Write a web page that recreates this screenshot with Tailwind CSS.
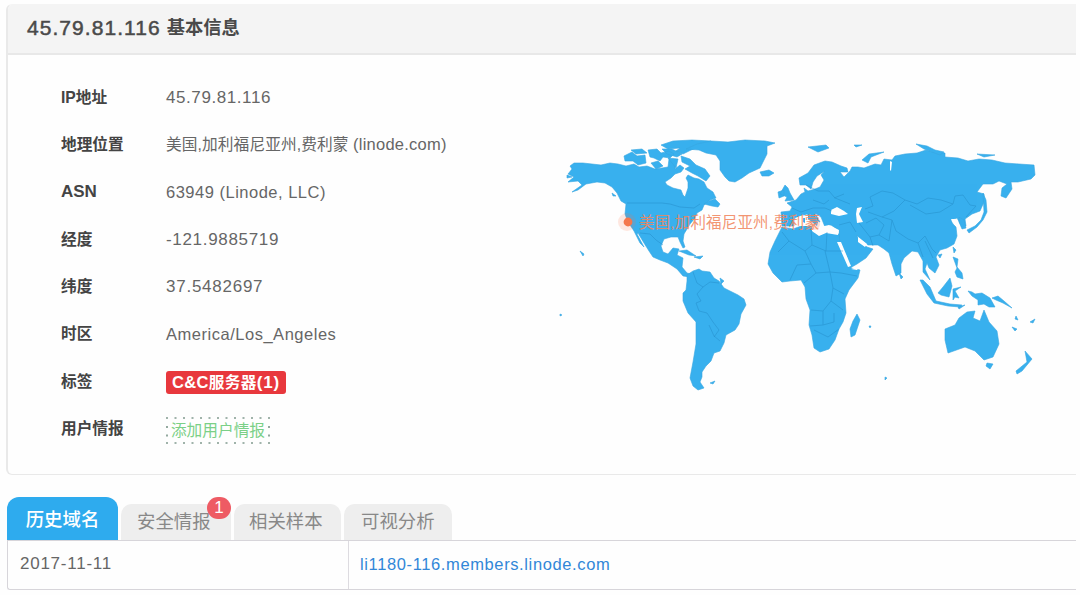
<!DOCTYPE html>
<html lang="zh-CN">
<head>
<meta charset="utf-8">
<title>45.79.81.116 基本信息</title>
<script src="https://cdn.jsdelivr.net/npm/@tailwindcss/browser@4"></script>
</head>
<body class="w-[1080px] h-[595px] overflow-hidden bg-[#fefefe] pl-[6px] pr-1 pt-1 font-['Liberation_Sans','Noto_Sans_CJK_SC',sans-serif] text-[#666]">
<section class="h-[471px] rounded-l-md border-y border-l-2 border-[#e9e9e9] border-t-[#f4f4f4] overflow-hidden">
  <header class="h-[50px] flex items-center gap-[6px] pl-[19px] pb-[3px] bg-[#f4f4f4] border-b-2 border-[#e8e8e8] text-[#4a4a4a]">
    <span class="text-[21px] tracking-[1.05px] [-webkit-text-stroke:0.5px_#4a4a4a]">45.79.81.116</span>
    <span class="text-[18.3px] font-bold">基本信息</span>
  </header>
  <div class="flex pt-[18px]">
    <dl class="w-[542px] pl-[53px] pt-[0.6px] text-[15.7px]">
      <div class="flex items-center h-[47.4px]"><dt class="w-[105px] font-bold text-[#444]">IP地址</dt><dd class="text-[17px] tracking-[0.58px]">45.79.81.116</dd></div>
      <div class="flex items-center h-[47.4px]"><dt class="w-[105px] font-bold text-[#444]">地理位置</dt><dd class="flex items-center whitespace-nowrap"><span class="w-[187px] tracking-[0.1px]">美国,加利福尼亚州,费利蒙</span><span class="text-[16.5px] tracking-[0.25px]">(linode.com)</span></dd></div>
      <div class="flex items-center h-[47.4px]"><dt class="w-[105px] font-bold text-[#444] text-[17px]">ASN</dt><dd class="text-[16.5px] tracking-[0.5px]">63949 (Linode, LLC)</dd></div>
      <div class="flex items-center h-[47.4px]"><dt class="w-[105px] font-bold text-[#444]">经度</dt><dd class="text-[17px] tracking-[0.68px]">-121.9885719</dd></div>
      <div class="flex items-center h-[47.4px]"><dt class="w-[105px] font-bold text-[#444]">纬度</dt><dd class="text-[17px] tracking-[0.75px]">37.5482697</dd></div>
      <div class="flex items-center h-[47.4px]"><dt class="w-[105px] font-bold text-[#444]">时区</dt><dd class="text-[16.5px] tracking-[0.52px]">America/Los_Angeles</dd></div>
      <div class="flex items-center h-[47.4px]"><dt class="w-[105px] font-bold text-[#444]">标签</dt><dd class="w-[120px] h-[23px] mt-[2px] flex items-center justify-center rounded-[3px] bg-[#e8383d] text-white font-bold tracking-[0.3px] whitespace-nowrap"><span class="text-[16.5px]">C&amp;C</span>服务器<span class="text-[17px] tracking-[0.8px]">(1)</span></dd></div>
      <div class="flex items-center h-[47.4px]"><dt class="w-[105px] font-bold text-[#444]">用户情报</dt><dd class="mt-[3px] grid place-items-center text-[#7bd087] whitespace-nowrap"><svg class="col-start-1 row-start-1" width="104" height="27" fill="none" stroke="#819b8f" stroke-width="1.7" stroke-dasharray="2 6.5"><path d="M0 1H104M0 26H104M1 9V22M103 9V22"/></svg><span class="col-start-1 row-start-1">添加用户情报</span></dd></div>
    </dl>
    <svg class="mt-[58px] shrink-0" width="500" height="265" viewBox="550 130 500 265" fill="#38b0ee" stroke="#38a6e0" stroke-width=".6" stroke-linejoin="round">
      <!-- North America -->
      <path d="M570 165L574 162L583 162L592 163L601 164L610 162L618 163L626 165L634 163L639 166L647 165L655 168L662 167L668 166L669 158L675 163L675 168L680 164L684 167L681 171L675 173L671 177L665 181L667 184L673 187L681 189L683 194L685 196L688 187L688 181L686 177L688 174L694 177L699 178L704 181L707 187L713 191L716 197L710 199L704 204L702 209L697 212L695 217L690 223L687 228L684 233L683 240L685 246L683 247L680 241L678 236L671 236L664 238L661 245L663 251L668 253L673 247L679 248L677 254L683 257L682 266L687 272L691 273L690 276L683 275L677 268L668 262L660 259L653 256L649 250L644 242L638 232L637 233L644 246L640 242L634 230L628 221L625 213L626 203L621 200L617 192L612 186L605 182L597 181L586 183L578 189L572 191L582 184L578 180L568 181L574 176L568 173L572 168Z"/>
      <!-- Arctic islands -->
      <path d="M624 155L632 151L637 155L645 154L646 162L638 164L633 160L625 160ZM631 149L642 148L647 152L636 153ZM648 149L657 148L661 152L669 150L674 153L670 157L663 156L660 160L654 157L650 156ZM651 162L658 160L663 165L656 168ZM662 148L672 148L682 153L677 156L667 153ZM668 157L678 158L676 167ZM681 155L690 158L696 164L705 168L710 175L706 180L698 175L692 172L685 168L690 165L682 161ZM661 144L673 140L692 139L711 140L700 146L691 149L683 153L676 150L680 147L668 148Z"/>
      <!-- Greenland -->
      <path d="M686 148L697 143L711 140L728 141L745 139L765 140L775 142L767 145L767 153L763 161L760 167L749 172L742 177L735 181L729 180L725 176L720 169L720 160L716 154L706 152L699 149Z"/>
      <path d="M704 203L709 200L715 198L720 203L718 206L712 205ZM760 171L769 169L774 172L769 175L762 175ZM679 250L687 249L696 255L689 254ZM694 256L703 255L700 258ZM567 174L572 176L567 177ZM580 250L584 253L583 255ZM612 192L616 195L613 195ZM560 313L562 314L560 315ZM885 376L887 377L885 379ZM869 325L871 325L870 327Z"/>
      <!-- South America -->
      <path d="M687 274L693 270L699 268L702 270L710 271L714 277L719 280L724 287L730 290L738 294L744 298L746 304L741 313L739 323L735 329L726 334L724 342L720 350L714 352L711 360L706 365L702 371L702 376L700 381L704 387L698 389L693 385L690 377L693 361L696 343L696 321L688 312L683 300L683 292L686 289L687 280ZM710 382L715 380L713 383ZM720 277L724 280L721 283Z"/>
      <!-- Europe and Asia -->
      <path d="M781 211L790 210L792 206L787 202L796 199L801 193L805 191L804 187L808 190L815 188L820 186L824 179L821 174L825 170L817 175L813 181L811 188L806 184L800 184L799 177L808 172L814 164L825 160L832 161L841 165L847 167L848 171L840 171L844 176L850 170L852 166L858 166L864 167L875 163L881 164L884 158L892 159L895 155L905 153L917 152L926 149L933 151L945 152L945 156L958 157L968 160L979 158L992 159L1005 162L1019 163L1034 164L1035 174L1031 178L1018 181L1011 181L1012 188L1006 197L1001 195L1002 187L1007 183L999 180L993 183L983 183L977 191L984 193L984 201L980 210L972 213L965 218L966 225L961 224L957 217L951 219L953 223L956 226L957 235L954 243L947 247L940 249L936 256L939 264L935 272L929 267L927 262L925 268L930 279L923 271L923 260L918 251L912 250L904 257L901 263L901 272L896 275L892 263L889 252L884 248L878 244L868 244L861 238L856 234L863 243L867 246L873 248L866 257L857 263L850 267L847 256L839 240L839 230L831 224L825 226L821 216L815 212L820 221L813 218L807 213L799 216L794 218L794 225L782 225Z"/>
      <path d="M780 193L785 184L788 187L790 192L794 199L785 200L787 196ZM778 191L784 189L784 195L779 197ZM808 146L826 144L829 147L818 151L812 148ZM854 144L862 144L856 146ZM862 159L869 153L884 151L871 156L868 162ZM916 143L927 145L935 149L944 151L940 154L924 148ZM977 153L995 154L984 156Z"/>
      <path d="M983 192L986 199L987 211L983 219L977 226L969 232L967 229L975 225L981 219L984 211ZM959 216L964 219L966 227L962 228L959 221Z"/>
      <!-- Africa and Madagascar -->
      <path d="M782 226L793 228L804 224L812 225L813 231L821 234L826 230L839 233L840 243L847 258L851 267L860 269L858 277L849 289L845 298L846 312L843 321L839 328L835 339L829 348L820 351L814 347L812 334L809 324L810 309L806 298L805 286L801 279L790 280L782 281L773 272L768 263L770 251L775 240ZM857 313L860 319L855 334L851 336L850 328L853 320Z"/>
      <!-- South-east Asia and Oceania -->
      <path d="M920 279L923 279L930 286L936 300L950 303L962 304L960 306L948 305L934 302L927 293ZM938 292L943 286L950 277L952 285L949 296L941 294ZM953 288L961 286L955 290L959 297L955 296L953 299ZM953 256L958 258L957 266L962 272L963 278L957 276L955 271L957 267ZM953 246L956 249L954 252ZM899 272L903 276L901 278ZM938 254L942 253L940 257ZM968 290L972 291L975 293L982 292L990 297L995 306L989 306L984 303L978 304L978 299L972 295ZM992 297L998 295L1004 300L1012 307L1003 302L996 299ZM958 306L965 304L959 308Z"/>
      <path d="M945 328L955 324L959 317L967 311L975 310L973 317L980 320L984 309L989 321L997 330L999 343L993 356L984 359L975 350L965 346L948 352L945 339ZM987 362L993 363L990 368L986 365ZM1025 350L1032 358L1022 370L1017 373L1016 370L1027 361ZM1012 326L1017 328L1015 330ZM1030 321L1035 318L1033 322ZM1016 315L1018 319L1015 318Z"/>
      <g fill="#fefefe" stroke="none">
        <path d="M831 209L837 206L844 210L848 213L839 215L831 213ZM857 207L862 206L859 213L863 221L857 222L856 213ZM795 217L803 214L812 222L820 226L829 224L839 229L838 234L826 232L819 235L812 230L812 225L799 225ZM837 241L841 241L851 265L848 266ZM858 236L867 243L865 246L858 241ZM851 268L860 265L857 269ZM951 218L957 218L953 222ZM890 160L892 161L891 170L890 169Z"/>
      </g>
      <path fill="#38b0ee" stroke="none" d="M808 212L818 221L817 225L808 218ZM803 217L805 217L805 222L803 221Z"/>
      <g fill="none" stroke="#238cc8" stroke-width=".8" opacity=".6">
        <path d="M627 202L662 202L670 203L680 206L694 207L700 203M640 232L650 233L656 239L663 244M693 271L697 282L703 286L697 293L701 300L696 302M703 286L710 281L719 282M696 302L699 310L707 312L713 321L719 329L714 336M709 324L714 335L720 340"/>
        <path d="M782 231L789 240L778 251M789 240L805 250L812 244L811 228M812 244L826 250L827 231M805 250L811 263L797 264L790 279M811 263L816 272L830 271L825 250L843 250M816 272L804 282M830 271L841 272L857 275M830 271L833 287L831 300L823 310L811 309M833 287L844 293M831 300L843 309M823 310L823 324L810 325M823 324L834 321L834 312M814 329L828 336L839 328"/>
        <path d="M806 184L818 190L829 190L835 197L850 203M792 207L801 211L813 207L825 207L832 210M813 199L824 203L829 199M834 197L844 193M865 208L873 205L870 196L882 190L893 192L905 199L894 210L882 216L868 211M905 199L917 203L928 197L941 199L953 203L940 211L926 213L910 204M953 203L955 195L963 194L970 204L976 205L966 216M882 216L892 219L896 230L908 238L918 242L925 235L932 248L936 252M866 222L876 217L884 224L879 234L870 236M879 234L889 240L892 219M859 222L870 236L873 245M839 224L850 221L856 231M918 242L923 256M925 240L933 257"/>
      </g>
      <circle cx="627" cy="221" r="9" fill="#ff7045" fill-opacity=".16" stroke="none"/>
      <circle cx="628" cy="221" r="4.4" fill="#f4774c" stroke="none"/>
      <circle cx="814" cy="223" r="6" fill="#ff7045" fill-opacity=".22" stroke="none"/>
      <text x="639" y="227" textLength="181" font-size="15.5" fill="#f1865f" fill-opacity=".88" stroke="none">美国,加利福尼亚州,费利蒙</text>
    </svg>
  </div>
</section>
<nav class="mt-[22px] pl-px h-[43px] flex items-end gap-[3px] text-[18.4px] text-[#888]">
  <div class="w-[111px] h-[43px] rounded-t-[12px] bg-[#2eabee] flex items-center justify-center pt-[3px] text-white font-medium">历史域名</div>
  <div class="relative w-[110px] h-[36px] rounded-t-[11px] bg-[#eee] flex items-center pl-4">安全情报<span class="absolute -top-[7px] left-[86px] w-[24px] h-[22px] rounded-full bg-[#ee5b64] text-white text-[17px] leading-[21px] text-center">1</span></div>
  <div class="w-[107px] h-[36px] rounded-t-[11px] bg-[#eee] flex items-center pl-[15px]">相关样本</div>
  <div class="w-[108px] h-[36px] rounded-t-[11px] bg-[#eee] flex items-center pl-[17px]">可视分析</div>
</nav>
<div class="h-[50px] ml-px flex items-center border-y border-l border-[#d7d5da] rounded-bl-[3px] text-[16.5px]">
  <div class="w-[341px] h-full flex items-center pl-3 pb-[2px] border-r border-[#dddbe0] text-[17px] tracking-[0.75px]">2017-11-11</div>
  <div class="pl-[11px] pb-[2px] text-[#3187d8] tracking-[0.62px]">li1180-116.members.linode.com</div>
</div>
</body>
</html>
